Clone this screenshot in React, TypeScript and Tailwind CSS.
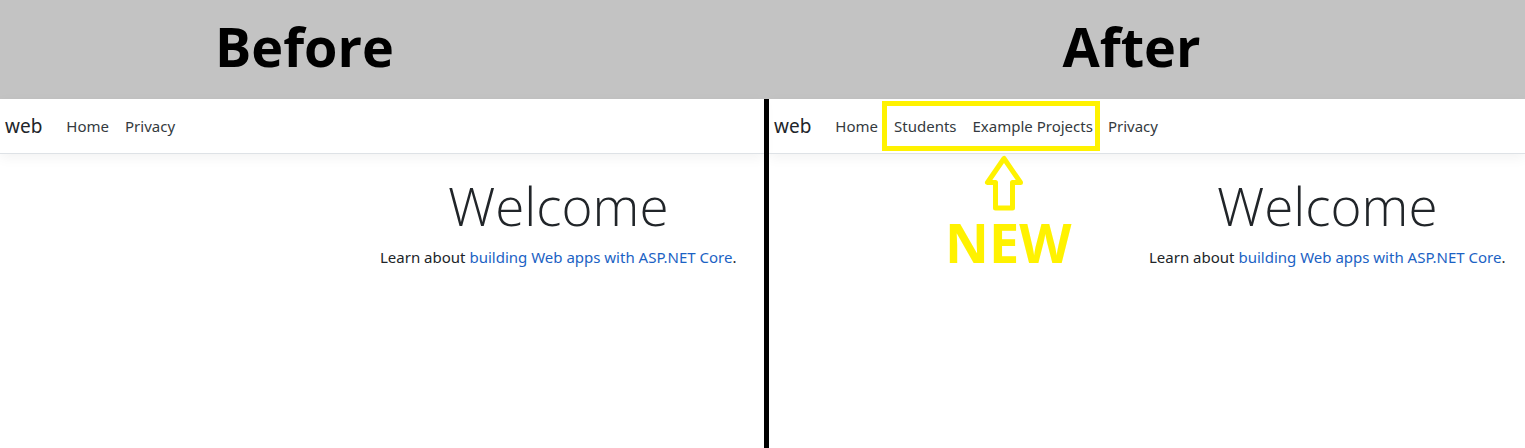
import type { ReactNode } from "react";

function NavLink({ children }: { children: ReactNode }) {
  return (
    <a href="#" className="whitespace-nowrap text-[#343a40]">
      {children}
    </a>
  );
}

function Annotation() {
  return (
    <div className="absolute left-[58px] top-full mt-2 flex flex-col items-center text-[#fff200]">
      <svg width="40" height="58" viewBox="0 0 40 58" fill="none" aria-hidden="true" className="mr-2">
        <path
          d="M20 4.5 L3.5 28.5 H11.5 V54 H28.5 V28.5 H36.5 Z"
          stroke="currentColor"
          strokeWidth="5"
          strokeLinejoin="round"
        />
      </svg>
      <strong className="text-[54px] font-bold leading-[60px] font-['Open_Sans',sans-serif]">NEW</strong>
    </div>
  );
}

function Site({ children }: { children: ReactNode }) {
  return (
    <div className="min-w-0">
      <header className="border-b border-[#dee2e6] shadow-[0_4px_12px_rgba(0,0,0,0.05)]">
        <nav className="flex h-[54px] items-center pl-[5px] text-[15px] leading-6">
          <a href="#" className="mr-6 text-[19px] text-[#212529]">
            web
          </a>
          {children}
        </nav>
      </header>
      <main className="ml-[380px] w-max pt-5 text-center text-[15px] leading-6 text-[#212529]">
        <h1 className="mb-2 text-[53px] font-light leading-[63px] font-['Open_Sans',sans-serif]">Welcome</h1>
        <p>
          Learn about{" "}
          <a href="#" className="text-[#1b62c4]">
            building Web apps with ASP.NET Core
          </a>
          .
        </p>
      </main>
    </div>
  );
}

export default function App() {
  return (
    <div className="flex min-h-screen flex-col overflow-hidden bg-white font-['Noto_Sans',sans-serif]">
      <div className="grid h-[99px] grid-cols-2 bg-[#c3c3c3] font-['Open_Sans',sans-serif] text-[54px] font-bold leading-[92px] text-black">
        <h2 className="pl-[215px]">Before</h2>
        <h2 className="pl-[300px]">After</h2>
      </div>
      <div className="grid flex-1 grid-cols-[764fr_5px_756fr]">
        <Site>
          <div className="flex gap-4">
            <NavLink>Home</NavLink>
            <NavLink>Privacy</NavLink>
          </div>
        </Site>
        <div className="bg-black" />
        <Site>
          <NavLink>Home</NavLink>
          <div className="relative mx-1 flex h-[50px] items-center gap-4 border-[5px] border-[#fff200] pl-[7px] pr-[2px]">
            <NavLink>Students</NavLink>
            <NavLink>Example Projects</NavLink>
            <Annotation />
          </div>
          <div className="pl-1">
            <NavLink>Privacy</NavLink>
          </div>
        </Site>
      </div>
    </div>
  );
}
